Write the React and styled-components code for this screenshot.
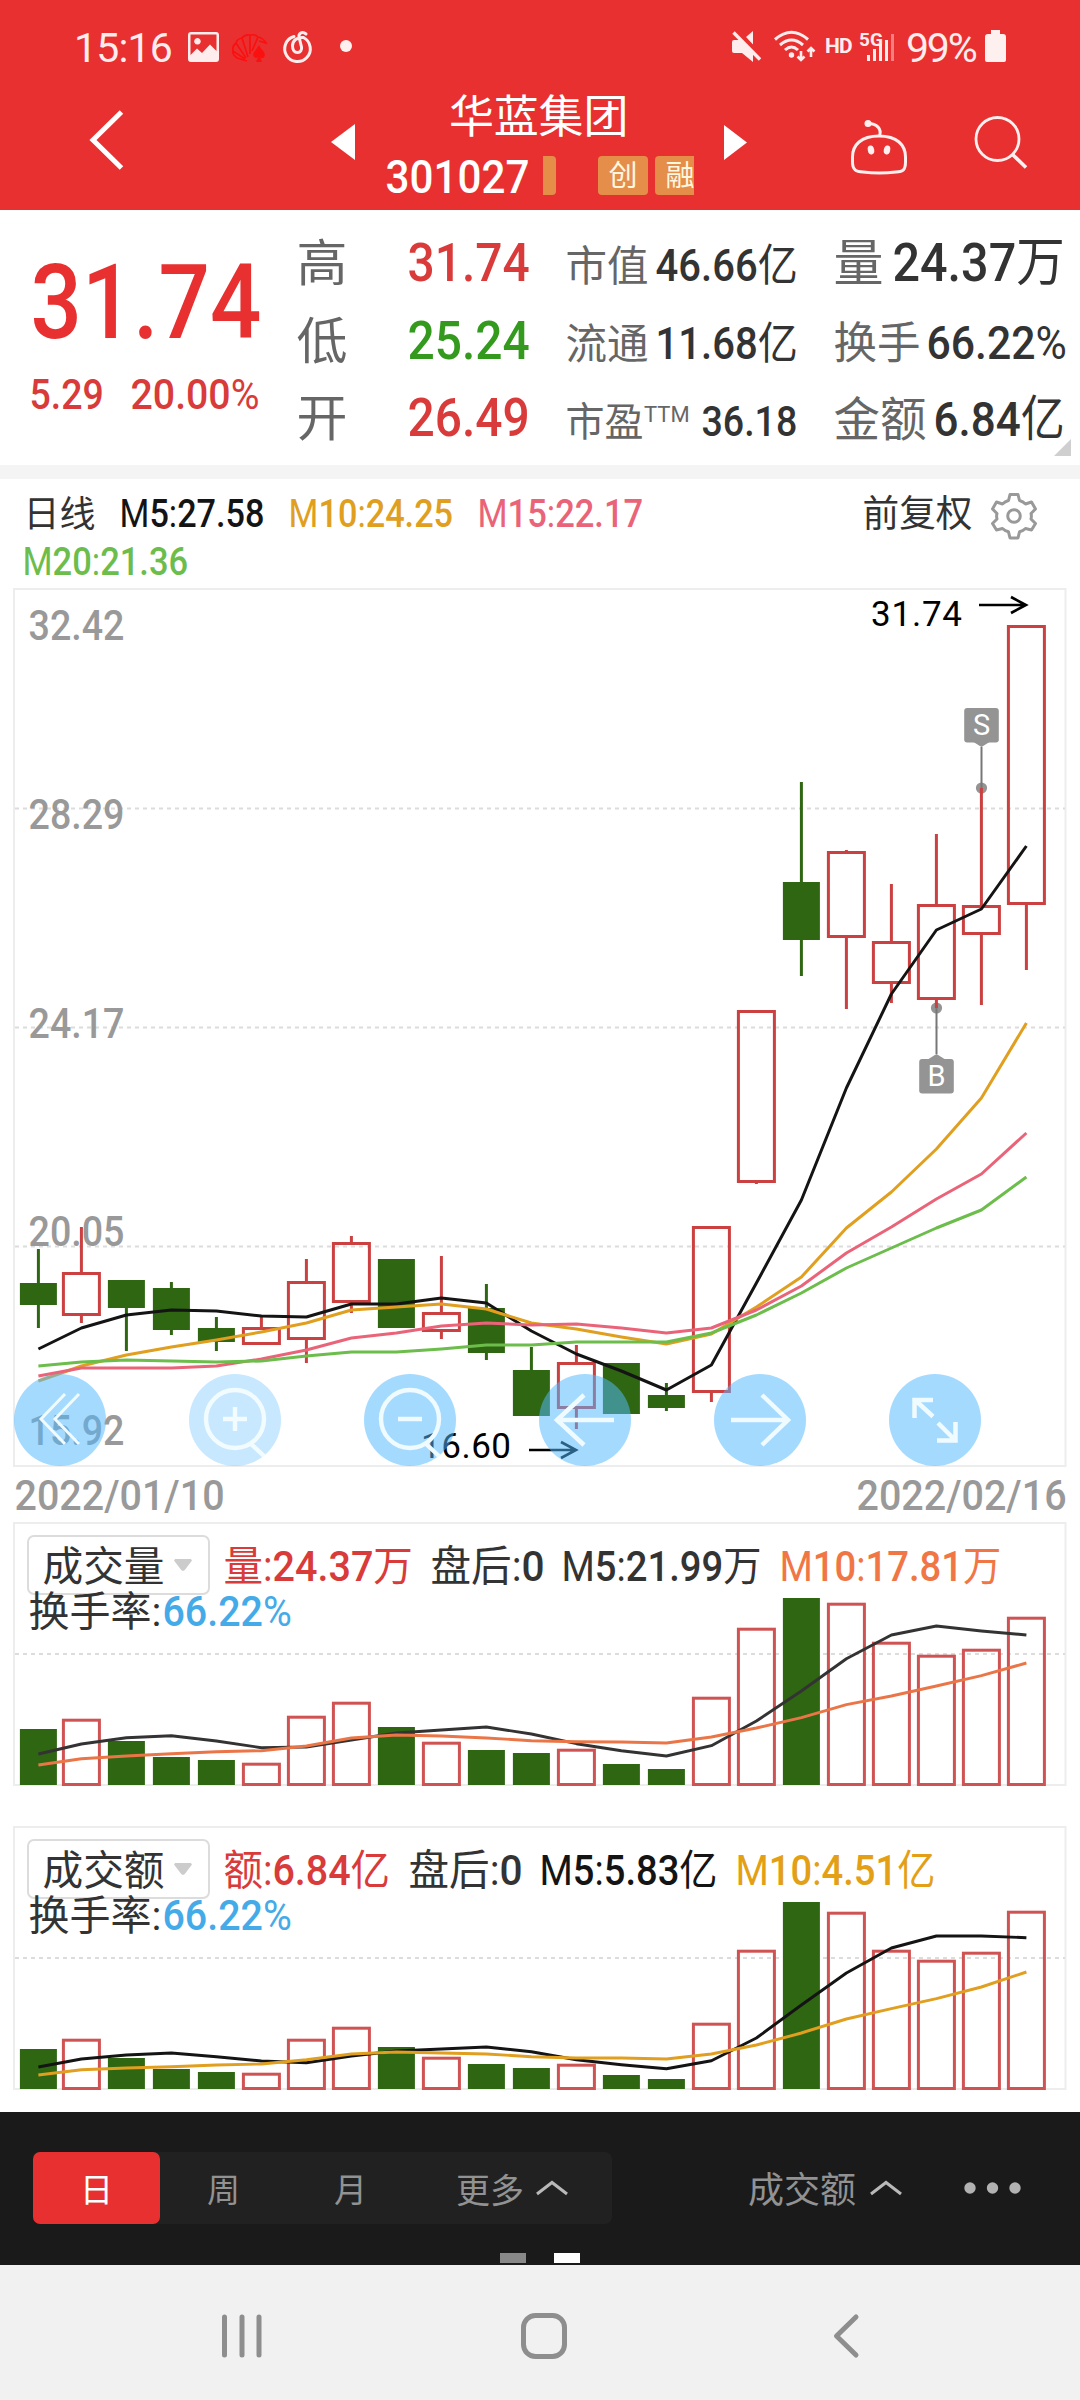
import React, { useLayoutEffect, useRef, useState } from "react";
import styled, { createGlobalStyle } from "styled-components";

const GlobalStyle = createGlobalStyle`
  * { box-sizing: border-box; }
  body {
    margin: 0;
    background: #fff;
    font-family: Roboto, "Noto Sans CJK SC", sans-serif;
  }
`;

const color = {
  red: "#e83030",
  rise: "#d93a3a",
  candle: "#cb4040",
  fall: "#2f6612",
  ink: "#333",
  label: "#666",
  muted: "#999",
  frame: "#ededed",
  ma5: "#141414",
  ma10: "#e09f1f",
  ma15: "#ea6479",
  ma20: "#6cbd4b",
};

/* ---------- text ---------- */

const FitBox = styled.span`
  display: block;
  flex: 0 0 ${(p) => p.$w}px;
  width: ${(p) => p.$w}px;
  margin-left: ${(p) => p.$gap || 0}px;
  font-size: ${(p) => p.$size}px;
  line-height: 1;
  color: ${(p) => p.$color || "inherit"};
  white-space: nowrap;
`;

const FitInner = styled.span`
  display: inline-block;
  transform-origin: 0 50%;
`;

const Digits = styled.span`
  font-weight: 500;
`;

const rich = (text) =>
  text
    .split(/(\d[\d./]*)/)
    .filter(Boolean)
    .map((part, i) => (/^\d/.test(part) ? <Digits key={i}>{part}</Digits> : part));

/* Condenses a run of text to the width of its slot. */
function Fit({ w, size, gap, color: c, children }) {
  const ref = useRef(null);
  const [k, setK] = useState(1);
  useLayoutEffect(() => {
    setK((w - 1) / ref.current.offsetWidth);
  }, [w, children]);
  return (
    <FitBox $w={w} $size={size} $gap={gap} $color={c}>
      <FitInner ref={ref} style={{ transform: `translateX(0.5px) scaleX(${k})` }}>
        {rich(children)}
      </FitInner>
    </FitBox>
  );
}

/* A row whose items all sit on one baseline, $base px below its top. */
const Line = styled.div`
  display: flex;
  align-items: baseline;
  height: ${(p) => p.$h}px;
  padding-left: ${(p) => p.$pad || 0}px;
  &::before {
    content: "";
    flex: none;
    width: 0;
    height: ${(p) => p.$base}px;
  }
`;

const Icon = styled.svg`
  display: block;
  flex: none;
  width: ${(p) => p.$w}px;
  height: ${(p) => p.$h}px;
  margin-left: ${(p) => p.$gap || 0}px;
  margin-top: ${(p) => p.$top || 0}px;
  overflow: visible;
`;

const GearIcon = styled(Icon)`
  align-self: flex-end;
  margin-bottom: -12px;
`;

/* ---------- header ---------- */

const Screen = styled.div`
  width: 1080px;
  height: 2400px;
  display: flex;
  flex-direction: column;
  background: #fff;
  overflow: hidden;
`;

const Header = styled.header`
  height: 210px;
  background: ${color.red};
  color: #fff;
`;

const StatusBar = styled.div`
  display: flex;
  height: 80px;
  padding-left: 74px;
  color: #ffecec;
`;

const StatusText = styled.span`
  width: ${(p) => p.$w}px;
  margin-left: ${(p) => p.$gap || 0}px;
  padding-top: ${(p) => p.$top}px;
  font-size: ${(p) => p.$size}px;
  font-weight: ${(p) => p.$weight || 400};
  letter-spacing: ${(p) => p.$track || 0}px;
  line-height: 40px;
  white-space: nowrap;
`;

const Signal = styled.div`
  width: 36px;
  margin-left: 7px;
  padding-top: 30px;
`;

const SignalLabel = styled.div`
  height: 4px;
  font-size: 19px;
  font-weight: 700;
  line-height: 19px;
`;

const TitleBar = styled.div`
  display: flex;
  height: 130px;
`;

const TitleBlock = styled.div`
  width: 309px;
  margin-left: 30px;
`;

const Name = styled.div`
  height: 70px;
  padding-left: 64px;
  font-size: 45px;
  line-height: 76px;
  letter-spacing: -0.2px;
`;

const CodeRow = styled.div`
  display: flex;
`;

const TagStrip = styled.div`
  display: flex;
  width: 151px;
  height: 39px;
  margin: 6px 0 0 13px;
  overflow: hidden;
`;

const Tag = styled.span`
  flex: 0 0 50px;
  height: 39px;
  margin-left: ${(p) => p.$gap}px;
  border-radius: 4px;
  background: #e48e49;
  color: #fff7e0;
  font-size: 29px;
  line-height: 41px;
  text-align: center;
`;

/* ---------- quote ---------- */

const Quote = styled.section`
  position: relative;
  display: flex;
  height: 255px;
`;

const PriceBlock = styled.div`
  width: 296px;
`;

const Stats = styled.div`
  width: ${(p) => p.$w}px;
  padding-top: 12px;
`;

const Corner = styled.i`
  position: absolute;
  right: 9px;
  bottom: 9px;
  width: 17px;
  height: 17px;
  background: #cfcfcf;
  clip-path: polygon(100% 0, 100% 100%, 0 100%);
`;

const Divider = styled.div`
  height: 14px;
  background: #f4f4f4;
`;

/* ---------- charts ---------- */

const ChartHead = styled.section`
  height: 109px;
`;

const Stack = styled.section`
  display: grid;
  height: ${(p) => p.$h}px;
  margin-bottom: ${(p) => p.$mb || 0}px;
  > * { grid-area: 1 / 1; }
`;

const Plot = styled.svg`
  display: block;
  width: 1080px;
  height: ${(p) => p.$h}px;
`;

const Tools = styled.div`
  align-self: end;
  display: flex;
  gap: 83px;
  padding: 0 0 1px 14px;
`;

const RoundButton = styled.button`
  width: 92px;
  height: 92px;
  padding: 0;
  border: 0;
  border-radius: 50%;
  background: rgba(83, 184, 255, ${(p) => (p.$dim ? 0.32 : 0.52)});
  svg { display: block; fill: none; stroke: ${(p) => (p.$dim ? "#f2fcff" : "#f0fbff")}; stroke-width: 4.4; }
`;

const Legend = styled.div`
  padding-top: 13px;
`;

const LegendTop = styled.div`
  display: flex;
  height: 50px;
  padding-left: 27px;
`;

const Select = styled.div`
  display: flex;
  flex: 0 0 183px;
  height: 60px;
  border: 2px solid #dcdcdc;
  border-radius: 7px;
  color: ${color.ink};
`;

const Caret = styled.i`
  width: 18px;
  height: 12px;
  margin: 22px 0 0 9px;
  background: #ccc;
  clip-path: polygon(6% 0, 94% 0, 100% 12%, 60% 92%, 50% 100%, 40% 92%, 0 12%);
`;

/* ---------- bottom ---------- */

const Toolbar = styled.div`
  height: 153px;
  padding: 40px 0 0 33px;
  background: #1a1a1a;
`;

const ToolRow = styled.div`
  display: flex;
  height: 101px;
`;

const Segments = styled.div`
  display: flex;
  width: 579px;
  height: 72px;
  border-radius: 7px;
  background: #212121;
`;

const Segment = styled.div`
  display: flex;
  align-items: center;
  justify-content: center;
  width: ${(p) => p.$w || 127}px;
  height: 72px;
  border-radius: 7px;
  background: ${(p) => (p.$active ? color.red : "transparent")};
  color: ${(p) => (p.$active ? "#fff" : "#929292")};
  font-size: ${(p) => p.$size || 33}px;
  line-height: 72px;
  padding-top: 5px;
`;

const Picker = styled(Segment)`
  width: 156px;
  margin-left: 135px;
`;

const Pages = styled.div`
  display: flex;
  gap: 28px;
  padding-left: 467px;
`;

const Page = styled.i`
  width: 26px;
  height: 10px;
  background: ${(p) => (p.$on ? "#fff" : "#888")};
`;

const NavBar = styled.nav`
  display: flex;
  height: 135px;
  background: #f1f1f1;
  svg { fill: none; stroke: #8e8e8e; stroke-width: 5; stroke-linecap: round; stroke-linejoin: round; }
`;

/* ---------- data ---------- */

const cx = (i) => (i === 0 ? 38.4 : 36.4 + 45 * i);

// [up, high, bodyTop, bodyBottom, low]
const candles = [
  [0, 1249, 1283, 1305, 1328], [1, 1227, 1272, 1316, 1323], [0, 1280, 1280, 1308, 1351],
  [0, 1282, 1288, 1330, 1335], [0, 1317, 1328, 1342, 1351], [1, 1315, 1327, 1345, 1345],
  [1, 1259, 1281, 1340, 1363], [1, 1236, 1242, 1303, 1313], [0, 1259, 1259, 1328, 1328],
  [1, 1256, 1312, 1332, 1339], [0, 1284, 1308, 1353, 1360], [0, 1347, 1370, 1416, 1416],
  [1, 1345, 1362, 1409, 1429], [0, 1363, 1363, 1414, 1414], [0, 1383, 1395, 1408, 1411],
  [1, 1226, 1226, 1393, 1402], [1, 1010, 1010, 1183, 1184], [0, 782, 882, 940, 976],
  [1, 850, 851, 938, 1009], [1, 884, 941, 984, 1003], [1, 834, 904, 1000, 1008],
  [1, 788, 905, 935, 1005], [1, 625, 625, 905, 970],
];

const averages = [
  [color.ma5, [1349, 1328, 1315, 1310, 1311, 1316, 1317, 1304, 1304, 1298, 1303, 1331, 1354, 1371, 1390, 1365, 1283, 1200, 1088, 994, 930, 909, 846]],
  [color.ma10, [1381, 1366, 1355, 1347, 1340, 1332, 1323, 1310, 1307, 1304, 1309, 1323, 1329, 1337, 1344, 1334, 1307, 1277, 1228, 1192, 1149, 1098, 1023]],
  [color.ma15, [1376, 1368, 1368, 1368, 1366, 1359, 1350, 1338, 1333, 1326, 1323, 1325, 1324, 1328, 1333, 1328, 1310, 1286, 1253, 1227, 1199, 1174, 1133]],
  [color.ma20, [1366, 1362, 1360, 1361, 1362, 1361, 1356, 1352, 1352, 1349, 1345, 1345, 1342, 1342, 1342, 1333, 1315, 1293, 1268, 1248, 1228, 1210, 1177]],
];

// Values are y positions inside each panel.
const volume = {
  bars: [207, 197, 219, 235, 238, 241, 194, 180, 205, 220, 228, 231, 227, 242, 247, 175, 106, 76, 81, 120, 133, 127, 95],
  lines: [
    ["#333", [232, 222, 215.7, 213.7, 219, 225.7, 225, 218, 211, 208, 205, 212, 221.7, 228.7, 234, 223.7, 199, 169, 136.7, 113, 104, 109, 113]],
    ["#ea7648", [243, 236.7, 234, 231.7, 229.7, 228.7, 224, 216, 213, 214, 216, 218.7, 219.7, 220, 221, 215, 206, 195.7, 182.7, 174, 164, 153.7, 141]],
  ],
};

const amount = {
  bars: [223, 213, 232, 243, 246, 247, 213, 201, 221, 231, 238, 242, 238, 249, 253, 197, 124, 76, 86, 124, 134, 126, 85],
  lines: [
    [color.ma5, [241, 233, 229, 227, 230.7, 235, 236.7, 230, 225, 223, 221, 225.7, 233.7, 238.7, 242.7, 234.7, 212, 179, 147, 122, 110, 110, 111.7]],
    [color.ma10, [249, 243.7, 242, 240.7, 239, 238, 233.7, 228, 226, 227, 228, 230.7, 232, 232, 233, 228, 219, 207, 193, 182.7, 172.7, 161, 146]],
  ],
};

const points = (ys) => ys.map((y, i) => `${cx(i)},${y}`).join(" ");

function Candle({ i, d: [up, high, top, bottom, low] }) {
  const x = cx(i);
  const c = up ? color.candle : color.fall;
  return (
    <g stroke={c} strokeWidth="3" fill="none">
      {high < top && <path d={`M${x} ${high}V${top}`} />}
      {low > bottom && <path d={`M${x} ${bottom}V${low}`} />}
      {up ? (
        <rect x={x - 18} y={top + 1.5} width="36" height={bottom - top - 3} />
      ) : (
        <rect x={x - 18.5} y={top} width="37" height={bottom - top} fill={c} stroke="none" />
      )}
    </g>
  );
}

function Grid({ y }) {
  return <path d={`M15 ${y}H1065`} stroke="#dcdcdc" strokeWidth="2" strokeDasharray="4 4" />;
}

function AxisLabel({ x = 28.5, y, w = 96, children }) {
  return (
    <text x={x} y={y} fontSize="42" fontWeight="500" fill={color.muted} textLength={w} lengthAdjust="spacingAndGlyphs">
      {children}
    </text>
  );
}

function Arrow({ x, y }) {
  return <path d={`M${x} ${y}H${x + 46}M${x + 32} ${y - 8}L${x + 47} ${y}L${x + 32} ${y + 8}`} fill="none" stroke="#000" strokeWidth="2.6" />;
}

function TradeMark({ x, y, dot, tip, children }) {
  const edge = dot > y ? y + 34 : y;
  return (
    <g fill="#949494">
      <circle cx={x} cy={dot} r="5.6" />
      <path d={`M${x} ${dot}V${tip}`} stroke="#777" strokeWidth="2" />
      <rect x={x - 17.3} y={y} width="34.6" height="34.5" rx="3" />
      <path d={`M${x - 8} ${edge}H${x + 8}L${x} ${tip}Z`} />
      <text x={x} y={y + 27} fontSize="29" textAnchor="middle" fill="#fff">{children}</text>
    </g>
  );
}

function PriceChart() {
  return (
    <Plot $h={879} viewBox="0 588 1080 879">
      <rect x="14" y="589" width="1051.5" height="877" fill="none" stroke={color.frame} strokeWidth="2" />
      <Grid y={808.5} />
      <Grid y={1027.5} />
      <Grid y={1246.5} />
      <AxisLabel y={640}>32.42</AxisLabel>
      <AxisLabel y={829}>28.29</AxisLabel>
      <AxisLabel y={1038}>24.17</AxisLabel>
      <AxisLabel y={1246}>20.05</AxisLabel>
      <AxisLabel y={1445}>15.92</AxisLabel>
      <TradeMark x={981.5} y={708} dot={788} tip={747}>S</TradeMark>
      <TradeMark x={936.5} y={1059} dot={1008} tip={1054}>B</TradeMark>
      {candles.map((d, i) => <Candle key={i} i={i} d={d} />)}
      {averages.map(([c, ys]) => (
        <polyline key={c} points={points(ys)} fill="none" stroke={c} strokeWidth="3" strokeLinejoin="round" />
      ))}
      <g fontSize="35">
        <text x="871" y="626" textLength="91">31.74</text>
        <text x="421" y="1458" textLength="90">16.60</text>
      </g>
      <Arrow x={979} y={605} />
      <Arrow x={529} y={1450} />
    </Plot>
  );
}

function BarChart({ data }) {
  return (
    <Plot $h={265} viewBox="0 0 1080 265">
      <rect x="14" y="1" width="1051.5" height="262" fill="none" stroke={color.frame} strokeWidth="2" />
      <Grid y={132} />
      {data.bars.map((y, i) => {
        const up = candles[i][0];
        return up ? (
          <rect key={i} x={cx(i) - 18} y={y + 1.2} width="36" height={261.3 - y} fill="none" stroke="#d05353" strokeWidth="3" />
        ) : (
          <rect key={i} x={cx(i) - 18.5} y={y} width="37" height={263 - y} fill={color.fall} />
        );
      })}
      {data.lines.map(([c, ys]) => (
        <polyline key={c} points={points(ys)} fill="none" stroke={c} strokeWidth="2.9" strokeLinejoin="round" />
      ))}
    </Plot>
  );
}

function Panel({ data, name, items, mb }) {
  return (
    <Stack $h={265} $mb={mb}>
      <BarChart data={data} />
      <Legend>
        <LegendTop>
          <Select>
            <Line $h={56} $base={44} $pad={13}>
              <Fit w={123} size={41}>{name}</Fit>
            </Line>
            <Caret />
          </Select>
          <Line $h={50} $base={46}>
            {items.map(([text, w, gap, c]) => (
              <Fit key={text} w={w} gap={gap} size={42} color={c}>{text}</Fit>
            ))}
          </Line>
        </LegendTop>
        <Line $h={60} $base={41} $pad={28}>
          <Fit w={134} size={41} color={color.ink}>换手率:</Fit>
          <Fit w={130} size={43} color="#45aae8">66.22%</Fit>
        </Line>
      </Legend>
    </Stack>
  );
}

const Sup = styled.span`
  width: 45px;
  font-size: 22px;
  line-height: 22px;
  color: ${color.label};
  transform: translateY(-14px);
`;

function Stat({ label, lw, ls, value, vw, vs, gap, c = color.ink, sup }) {
  return (
    <Line $h={77.5} $base={59}>
      <Fit w={lw} size={ls} color={color.label}>{label}</Fit>
      {sup && <Sup>{sup}</Sup>}
      <Fit w={vw} size={vs} gap={gap} color={c}>{value}</Fit>
    </Line>
  );
}

const chevronUp = <path d="M1 13L16 1.5L31 13" fill="none" stroke="#b9b9b9" strokeWidth="3" />;

export default function App() {
  return (
    <Screen>
      <GlobalStyle />
      <Header>
        <StatusBar>
          <StatusText $w={114} $top={28} $size={41} $track={-0.8}>15:16</StatusText>
          <Icon $w={31} $h={30} $top={32} viewBox="0 0 31 30">
            <path fill="#ffecec" fillRule="evenodd" d="M3 0H28A3 3 0 0 1 31 3V27A3 3 0 0 1 28 30H3A3 3 0 0 1 0 27V3A3 3 0 0 1 3 0ZM2.5 2.5V23L9 16.5L14 21L22 12.5L28.5 19V2.5ZM9.5 6A3.3 3.3 0 1 1 9.4 6Z" />
          </Icon>
          <Icon $w={35} $h={28} $gap={13} $top={34} viewBox="0 0 35 28" fill="none" stroke="#fb1010" strokeWidth="1.7">
            <path d="M15 27L5 24Q0 20 1 17L13 25M1 17Q0 12 4 9L14 24M4 9Q5 5 10 4L16 23M10 4Q13 0 18 1L18 20M18 1Q23 0 26 3L20 17M26 3Q31 4 34 9L27 7" />
            <path d="M27 11Q28 14 32 18Q34 22 31 24Q29 25 28 23L30 28H24L26 23Q24 25 22 23Q20 20 23 17Z" fill="#fb1010" stroke="none" />
          </Icon>
          <Icon $w={29} $h={31} $gap={16} $top={31} viewBox="0 0 29 31" fill="none" stroke="#ffecec" strokeWidth="3" strokeLinecap="round">
            <path d="M11 5.5A12.8 12.8 0 1 0 20.5 6.5C14 6 9.500 9.500 9.500 15C9.500 19 11.500 21.500 14.500 21.500C17.500 21.500 19 19 18.500 16L16 6C15.500 2 19.500 0 23 3" />
          </Icon>
          <Icon $w={12} $h={12} $gap={28} $top={40} viewBox="0 0 12 12"><circle cx="6" cy="6" r="6" fill="#fff0f0" /></Icon>
          <Icon $w={29} $h={31} $gap={380} $top={31} viewBox="0 0 29 31">
            <path fill="#ffecec" d="M0 11Q0 9 2 9H9L21 21V31L10 22H2Q0 22 0 20ZM14 6L21 0V14Z" />
            <path d="M6.500 1.500L29 24" stroke={color.red} strokeWidth="3.500" />
            <path d="M1.500 1.500L28 28.500" stroke="#ffecec" strokeWidth="3.400" />
          </Icon>
          <Icon $w={42} $h={32} $gap={13} $top={30} viewBox="0 0 42 32" fill="none" stroke="#ffecec" strokeWidth="3">
            <path d="M1 9.500Q17.500-5 34 9.500M6 15Q17.500 5 29 15M11 20Q17.500 14 24 20" />
            <circle cx="17.500" cy="25" r="2.700" fill="#ffecec" stroke="none" />
            <path strokeWidth="2.600" d="M27 21V30M23.500 26.500L27 30L30.500 26.500M37 27V18M33.500 21.500L37 18L40.500 21.500" />
          </Icon>
          <StatusText $w={27} $gap={9} $top={26} $size={21} $weight={700} $track={-0.8}>HD</StatusText>
          <Signal>
            <SignalLabel>5G</SignalLabel>
            <Icon $w={36} $h={28} viewBox="0 0 36 28" stroke="#ffecec" strokeWidth="3">
              <path d="M9.500 27V21M15.500 27V15M21.500 27V10M27.500 27V6" />
              <path d="M33.500 27V0" stroke="#f38080" />
            </Icon>
          </Signal>
          <StatusText $w={79} $gap={11} $top={28} $size={41} $track={-2.2}>99%</StatusText>
          <Icon $w={21} $h={32} $top={30} viewBox="0 0 21 32">
            <path fill="#fff0f0" d="M6 0H15V4H18A3 3 0 0 1 21 7V30A2 2 0 0 1 19 32H2A2 2 0 0 1 0 30V7A3 3 0 0 1 3 4H6Z" />
          </Icon>
        </StatusBar>
        <TitleBar>
          <Icon $w={34} $h={60} $gap={90} $top={30} viewBox="0 0 34 60" fill="none" stroke="#fff" strokeWidth="5">
            <path d="M31.500 2L3 30L31.500 58" />
          </Icon>
          <Icon $w={24} $h={36} $gap={207} $top={44} viewBox="0 0 24 36"><path fill="#fff" d="M24 0V36L0 18Z" /></Icon>
          <TitleBlock>
            <Name>华蓝集团</Name>
            <CodeRow>
              <Line $h={60} $base={43}>
                <Fit w={145} size={46}>301027</Fit>
              </Line>
              <TagStrip>
                <Tag $gap={-37} />
                <Tag $gap={42}>创</Tag>
                <Tag $gap={7}>融</Tag>
              </TagStrip>
            </CodeRow>
          </TitleBlock>
          <Icon $w={23} $h={35} $gap={30} $top={45} viewBox="0 0 23 35"><path fill="#fff" d="M0 0V35L23 17.500Z" /></Icon>
          <Icon $w={58} $h={56} $gap={103} $top={40} viewBox="0 0 58 56" fill="none" stroke="#ffefef" strokeWidth="3">
            <path d="M29 16C47 16 55.500 25 55.500 37V42C55.500 50 53 51.500 46 52Q29 54 13 52C6 51.500 2.500 50 2.500 42V37C2.500 25 11 16 29 16Z" />
            <path d="M29.500 16C32 9 27 3.500 18 3.500" />
            <circle cx="18" cy="3.500" r="3.500" fill="#ffefef" stroke="none" />
            <ellipse cx="21" cy="30" rx="3.200" ry="4.500" fill="#ffefef" stroke="none" transform="rotate(-12 21 30)" />
            <ellipse cx="37" cy="30" rx="3.200" ry="4.500" fill="#ffefef" stroke="none" transform="rotate(12 37 30)" />
          </Icon>
          <Icon $w={52} $h={54} $gap={67} $top={36} viewBox="0 0 52 54" fill="none" stroke="#ffefef" strokeWidth="2.800">
            <circle cx="22.500" cy="23" r="21.500" />
            <path d="M37 38L51 51.500" strokeWidth="3.600" />
          </Icon>
        </TitleBar>
      </Header>

      <Quote>
        <PriceBlock>
          <Line $h={146} $base={128} $pad={30}>
            <Fit w={232} size={103} color={color.red}>31.74</Fit>
          </Line>
          <Line $h={70} $base={53} $pad={29}>
            <Fit w={75} size={42} color={color.rise}>5.29</Fit>
            <Fit w={130} size={42} gap={26} color={color.rise}>20.00%</Fit>
          </Line>
        </PriceBlock>
        <Stats $w={269}>
          <Stat label="高" lw={52} ls={50} value="31.74" vw={123} vs={53} gap={59} c={color.rise} />
          <Stat label="低" lw={52} ls={50} value="25.24" vw={123} vs={53} gap={59} c="#339a1e" />
          <Stat label="开" lw={52} ls={50} value="26.49" vw={123} vs={53} gap={59} c={color.rise} />
        </Stats>
        <Stats $w={268}>
          <Stat label="市值" lw={84} ls={42} value="46.66亿" vw={143} vs={44} gap={6} />
          <Stat label="流通" lw={84} ls={42} value="11.68亿" vw={143} vs={44} gap={6} />
          <Stat label="市盈" lw={79} ls={40} sup="TTM" value="36.18" vw={97} vs={43} gap={12} />
        </Stats>
        <Stats $w={240}>
          <Stat label="量" lw={51} ls={50} value="24.37万" vw={173} vs={53} gap={8} />
          <Stat label="换手" lw={88} ls={44} value="66.22%" vw={141} vs={47} gap={5} />
          <Stat label="金额" lw={94} ls={47} value="6.84亿" vw={132} vs={49} gap={6} />
        </Stats>
        <Corner />
      </Quote>
      <Divider />

      <ChartHead>
        <Line $h={48} $base={48} $pad={23}>
          <Fit w={73} size={36} color={color.ink}>日线</Fit>
          <Fit w={146} size={38} gap={23} color={color.ma5}>M5:27.58</Fit>
          <Fit w={166} size={38} gap={23} color={color.ma10}>M10:24.25</Fit>
          <Fit w={167} size={38} gap={23} color={color.ma15}>M15:22.17</Fit>
          <Fit w={111} size={37} gap={218} color={color.ink}>前复权</Fit>
          <GearIcon $w={46} $h={46} $gap={18} viewBox="0 0 46 46" fill="none" stroke="#999" strokeWidth="3">
            <path strokeLinejoin="round" d="M19 1.500H27L28.500 7.500Q32 8.500 34.500 11L40.500 9L44.500 16L40 20.500Q40.800 23 40 26L44.500 30.500L40.500 37L34.500 35.500Q32 38 28.500 38.800L27 45H19L17.500 38.800Q14 38 11.500 35.500L5.500 37L1.500 30.500L6 26Q5.200 23 6 20.500L1.500 16L5.500 9L11.500 11Q14 8.500 17.500 7.500Z" />
            <circle cx="23" cy="23" r="6.300" />
          </GearIcon>
        </Line>
        <Line $h={61} $base={48} $pad={22}>
          <Fit w={167} size={38} color={color.ma20}>M20:21.36</Fit>
        </Line>
      </ChartHead>

      <Stack $h={879}>
        <PriceChart />
        <Tools>
          <RoundButton>
            <svg width="92" height="92"><path d="M51 20L27 45L51 70M65 20L41 45L65 70" strokeWidth="3" /></svg>
          </RoundButton>
          <RoundButton $dim>
            <svg width="92" height="92"><circle cx="46" cy="45" r="29" /><path d="M34 45H58M46 33V57M62 70L75 82" /></svg>
          </RoundButton>
          <RoundButton>
            <svg width="92" height="92"><circle cx="46" cy="45" r="29" /><path d="M34 45H58M62 70L75 82" /></svg>
          </RoundButton>
          <RoundButton>
            <svg width="92" height="92"><path d="M75 46H18M45 21L18 46L45 71" strokeWidth="4.500" /></svg>
          </RoundButton>
          <RoundButton>
            <svg width="92" height="92"><path d="M17 46H74M48 21L74 46L48 71" strokeWidth="4.500" /></svg>
          </RoundButton>
          <RoundButton>
            <svg width="92" height="92"><path d="M25.500 44V26H44M26 26L44 42.500M66.500 48V66.500H48M66 66L49 49" strokeWidth="4.500" /></svg>
          </RoundButton>
        </Tools>
      </Stack>

      <Line $h={55} $base={43} $pad={14}>
        <Fit w={211} size={43} color={color.muted}>2022/01/10</Fit>
        <Fit w={211} size={43} gap={631} color={color.muted}>2022/02/16</Fit>
      </Line>

      <Panel
        data={volume}
        name="成交量"
        mb={39}
        items={[
          ["量:24.37万", 190, 13, color.rise],
          ["盘后:0", 115, 17, color.ink],
          ["M5:21.99万", 201, 16, color.ink],
          ["M10:17.81万", 223, 17, "#f07645"],
        ]}
      />
      <Panel
        data={amount}
        name="成交额"
        mb={21}
        items={[
          ["额:6.84亿", 168, 13, color.rise],
          ["盘后:0", 115, 17, color.ink],
          ["M5:5.83亿", 179, 16, color.ma5],
          ["M10:4.51亿", 201, 17, "#e39f16"],
        ]}
      />

      <Toolbar>
        <ToolRow>
          <Segments>
            <Segment $active>日</Segment>
            <Segment>周</Segment>
            <Segment>月</Segment>
            <Segment $w={196} $size={34}>
              更多
              <Icon $w={32} $h={14} $gap={12} $top={-6} viewBox="0 0 32 14">{chevronUp}</Icon>
            </Segment>
          </Segments>
          <Picker $size={36}>
            成交额
            <Icon $w={32} $h={14} $gap={14} $top={-6} viewBox="0 0 32 14">{chevronUp}</Icon>
          </Picker>
          <Icon $w={57} $h={12} $gap={61} $top={30} viewBox="0 0 57 12" fill="#b2b2b2">
            <circle cx="6" cy="6" r="5.700" /><circle cx="28.500" cy="6" r="5.700" /><circle cx="51" cy="6" r="5.700" />
          </Icon>
        </ToolRow>
        <Pages>
          <Page />
          <Page $on />
        </Pages>
      </Toolbar>
      <NavBar>
        <Icon $w={40} $h={44} $gap={222} $top={49} viewBox="0 0 40 44"><path d="M2.500 3V41M20 3V41M37 3V41" /></Icon>
        <Icon $w={46} $h={46} $gap={259} $top={48} viewBox="0 0 46 46"><rect x="2.500" y="2.500" width="41" height="41" rx="12" /></Icon>
        <Icon $w={26} $h={44} $gap={266} $top={49} viewBox="0 0 26 44"><path d="M23 3L3.500 22L23 41" /></Icon>
      </NavBar>
    </Screen>
  );
}
